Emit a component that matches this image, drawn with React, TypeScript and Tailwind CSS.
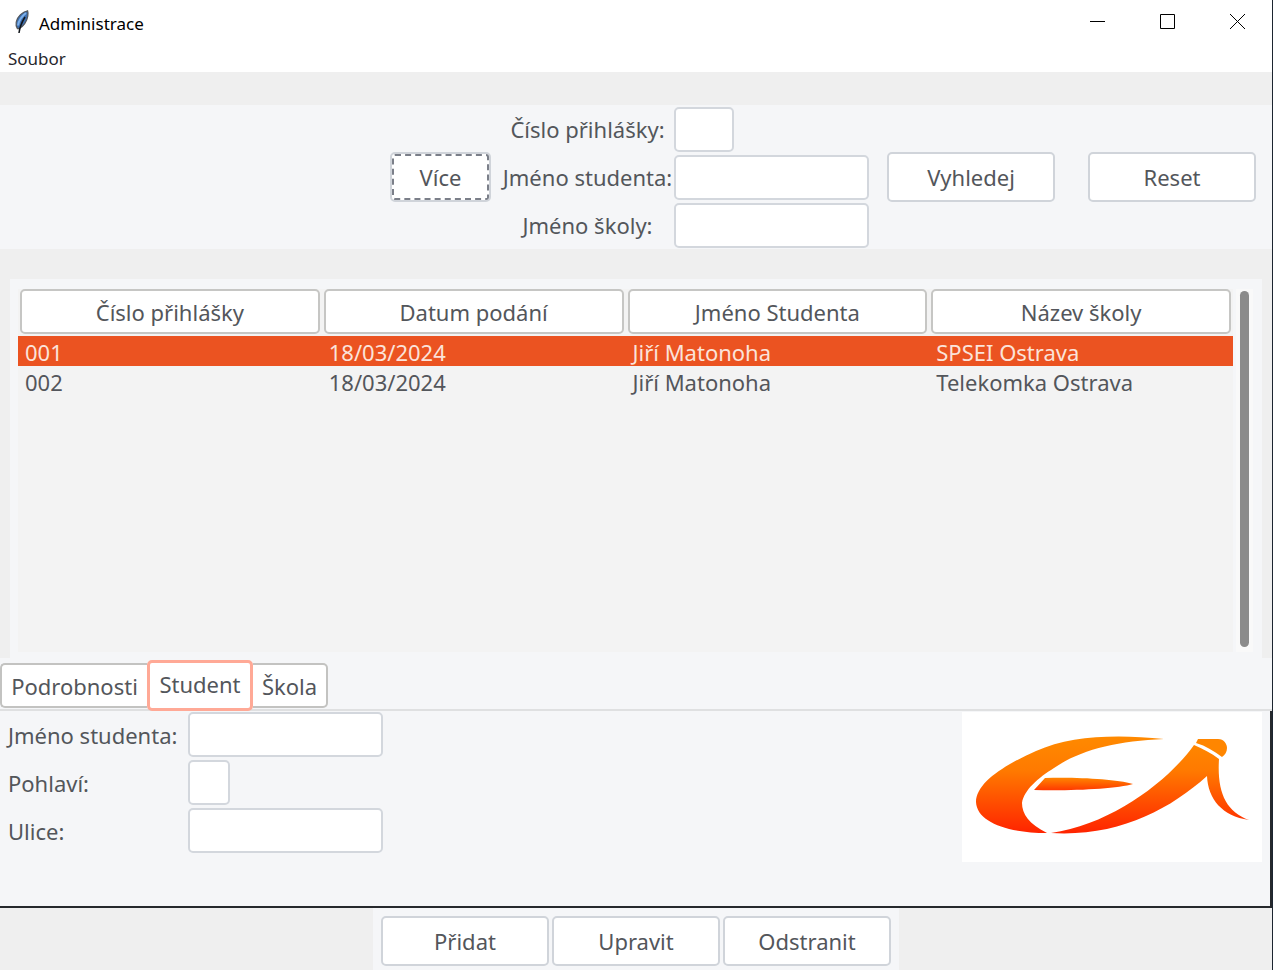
import type { ReactNode } from 'react';

const box = 'h-[45px] rounded-[5px] border-2 border-[#d3d7dd] bg-white px-2 outline-none';

function Button({ children, className = 'w-[168px]' }: { children: ReactNode; className?: string }) {
  return (
    <button type="button" className={`h-[50px] shrink-0 rounded-[5px] border-2 border-[#d0d4da] bg-white text-center ${className}`}>
      {children}
    </button>
  );
}

function Feather() {
  return (
    <svg viewBox="0 0 16 24" className="h-6 w-4" aria-hidden="true">
      <path d="M13.6 .8C8.600 1.800 3.400 6.200 2.200 12c-.4 2.200-.2 4.400 1.200 6.600l1.500 0c4.500-1.800 8.100-7.400 8.900-12.400.3-2 .4-3.800-.2-5.400z" fill="#3d6fb0" stroke="#55585c" strokeWidth="1.200" />
      <path d="M12 3C7.500 6.500 4.600 10.500 4 15.500" fill="none" stroke="#7db0ea" strokeWidth="2" />
      <path d="M11 7C8.500 11 6 15 5 23" fill="none" stroke="#101419" strokeWidth="1.500" />
    </svg>
  );
}

function Logo() {
  return (
    <svg viewBox="0 0 300 150" className="h-[150px] w-[300px] bg-white" role="img" aria-label="EA">
      <defs>
        <linearGradient id="body" gradientUnits="userSpaceOnUse" x1="0" y1="24" x2="0" y2="122">
          <stop offset="0" stopColor="#ff8a00" />
          <stop offset="0.35" stopColor="#ff7a00" />
          <stop offset="1" stopColor="#ff2200" />
        </linearGradient>
        <linearGradient id="bar" gradientUnits="userSpaceOnUse" x1="0" y1="66" x2="0" y2="78">
          <stop offset="0" stopColor="#ff8400" />
          <stop offset="1" stopColor="#ff3a00" />
        </linearGradient>
      </defs>
      <path fill="url(#body)" d="M202 27C152 22 108 24 74 39C42 53 14 71 14 90C15 110 45 121 85 121C67 112 60 102 60 91C62 78 76 66 92 56C118 38 154 29 202 27Z" />
      <path fill="url(#bar)" d="M83 66C115 65 153 67 171 72C155 77 108 79 72 78Z" />
      <path fill="url(#body)" d="M89 121C151 112 207 68 232 33C241 37 249 41 257 47C255 79 263 99 287 108C260 104 246 87 245 64C207 98 156 125 89 121Z" />
      <path fill="#ff8600" d="M236 27H256C262 27 265 32 265 36C265 40 263 43 260 45C252 39 244 34 234 31Z" />
    </svg>
  );
}

const columns = ['Číslo přihlášky', 'Datum podání', 'Jméno Studenta', 'Název školy'];
const rows = [
  ['001', '18/03/2024', 'Jiří Matonoha', 'SPSEI Ostrava'],
  ['002', '18/03/2024', 'Jiří Matonoha', 'Telekomka Ostrava'],
];

export default function App() {
  return (
    <div className="flex min-h-screen flex-col border-r border-[#1c2530] bg-[#efefef] font-['Noto_Sans','Open_Sans',sans-serif] text-[22px] leading-[30px] text-[#53565b]">
      <header className="bg-white text-black">
        <div className="flex h-[43px] items-center pl-[14px]">
          <Feather />
          <h1 className="ml-[9px] flex-1 pt-1 text-[17px] leading-6">Administrace</h1>
          <button type="button" aria-label="Minimalizovat" className="flex h-full w-[70px] items-center justify-center">
            <svg width="15" height="15" viewBox="0 0 15 15"><path d="M0 7.500H15" stroke="#000" /></svg>
          </button>
          <button type="button" aria-label="Maximalizovat" className="flex h-full w-[70px] items-center justify-center">
            <svg width="15" height="15" viewBox="0 0 15 15"><path d="M.5 .5H14.500V14.500H.5Z" fill="none" stroke="#000" /></svg>
          </button>
          <button type="button" aria-label="Zavřít" className="flex h-full w-[70px] items-center justify-center">
            <svg width="15" height="15" viewBox="0 0 15 15"><path d="M0 0L15 15M15 0L0 15" stroke="#000" /></svg>
          </button>
        </div>
        <nav className="flex h-[29px] items-end pb-[1px] pl-2">
          <button type="button" className="text-[17px] leading-6 text-[#26262c]">Soubor</button>
        </nav>
      </header>

      <form className="mt-[33px] flex h-36 items-center justify-end bg-[#f5f6f8] pr-4" onSubmit={(e) => e.preventDefault()}>
        <Button className="w-[101px] outline-2 -outline-offset-4 outline-[#7b7f89] outline-dashed">Více</Button>
        <div className="ml-[10px] grid grid-cols-[173px_195px] items-center gap-y-[3px]">
          <label htmlFor="f-number" className="text-center">Číslo přihlášky:</label>
          <input id="f-number" className={`${box} w-[60px]`} />
          <label htmlFor="f-student" className="whitespace-nowrap text-center">Jméno studenta:</label>
          <input id="f-student" className={`${box} w-full`} />
          <label htmlFor="f-school" className="text-center">Jméno školy:</label>
          <input id="f-school" className={`${box} w-full`} />
        </div>
        <div className="ml-[18px] flex gap-[33px]">
          <Button>Vyhledej</Button>
          <Button>Reset</Button>
        </div>
      </form>

      <section className="mx-[10px] mt-[30px] flex h-[379px] gap-[3px] bg-[#f5f6f8] pt-[10px] pr-[9px] pb-[6px] pl-2">
        <div className="flex-1 bg-[#f3f3f3]">
          <table className="w-full table-fixed border-collapse">
            <thead>
              <tr>
                {columns.map((c) => (
                  <th key={c} scope="col" className="h-[47px] px-[2px] pb-[2px] font-normal">
                    <div className="flex h-[45px] items-center justify-center rounded-[5px] border-2 border-[#c6c6c4] bg-white">{c}</div>
                  </th>
                ))}
              </tr>
            </thead>
            <tbody>
              {rows.map((r, i) => (
                <tr key={r[0]} className={i === 0 ? 'bg-[#eb5321] text-[#fbe3da]' : ''}>
                  {r.map((v) => (
                    <td key={v} className="h-[30px] pt-[2px] pr-0 pb-0 pl-[7px] leading-7 whitespace-nowrap">{v}</td>
                  ))}
                </tr>
              ))}
            </tbody>
          </table>
        </div>
        <div className="flex w-[17px] justify-center bg-[#f9f9f9] py-[2px]">
          <div className="h-[356px] w-[9px] rounded-full bg-[#8b8b8b]" />
        </div>
      </section>

      <div role="tablist" className="flex h-[53px] items-end border-b-2 border-[#dfe0e1] bg-[#f5f6f8]">
        <button type="button" role="tab" aria-selected="false" className="mb-[1px] h-[45px] w-[147px] rounded-l-[5px] border-2 border-r-0 border-[#c3c3c1] bg-white">Podrobnosti</button>
        <button type="button" role="tab" aria-selected="true" className="-mb-[2px] h-[51px] w-[106px] rounded-[5px] border-[3px] border-[#ffa996] bg-white pb-1">Student</button>
        <button type="button" role="tab" aria-selected="false" className="mb-[1px] h-[45px] w-[75px] rounded-r-[5px] border-2 border-l-0 border-[#c3c3c1] bg-white">Škola</button>
      </div>

      <div role="tabpanel" className="flex h-[197px] items-start justify-between border-r-2 border-b-2 border-[#26292d] bg-[#f5f6f8] pt-[1px] pr-2">
        <div className="grid grid-cols-[180px_195px] items-center gap-y-[3px] pl-2">
          <label htmlFor="d-student" className="whitespace-nowrap">Jméno studenta:</label>
          <input id="d-student" className={`${box} w-full`} />
          <label htmlFor="d-gender">Pohlaví:</label>
          <input id="d-gender" className={`${box} w-[42px]`} />
          <label htmlFor="d-street">Ulice:</label>
          <input id="d-street" className={`${box} w-full`} />
        </div>
        <Logo />
      </div>

      <footer className="flex flex-1 justify-center">
        <div className="flex gap-[3px] bg-[#f5f6f8] px-2 pt-2 pb-1">
          <Button>Přidat</Button>
          <Button>Upravit</Button>
          <Button>Odstranit</Button>
        </div>
      </footer>
    </div>
  );
}
